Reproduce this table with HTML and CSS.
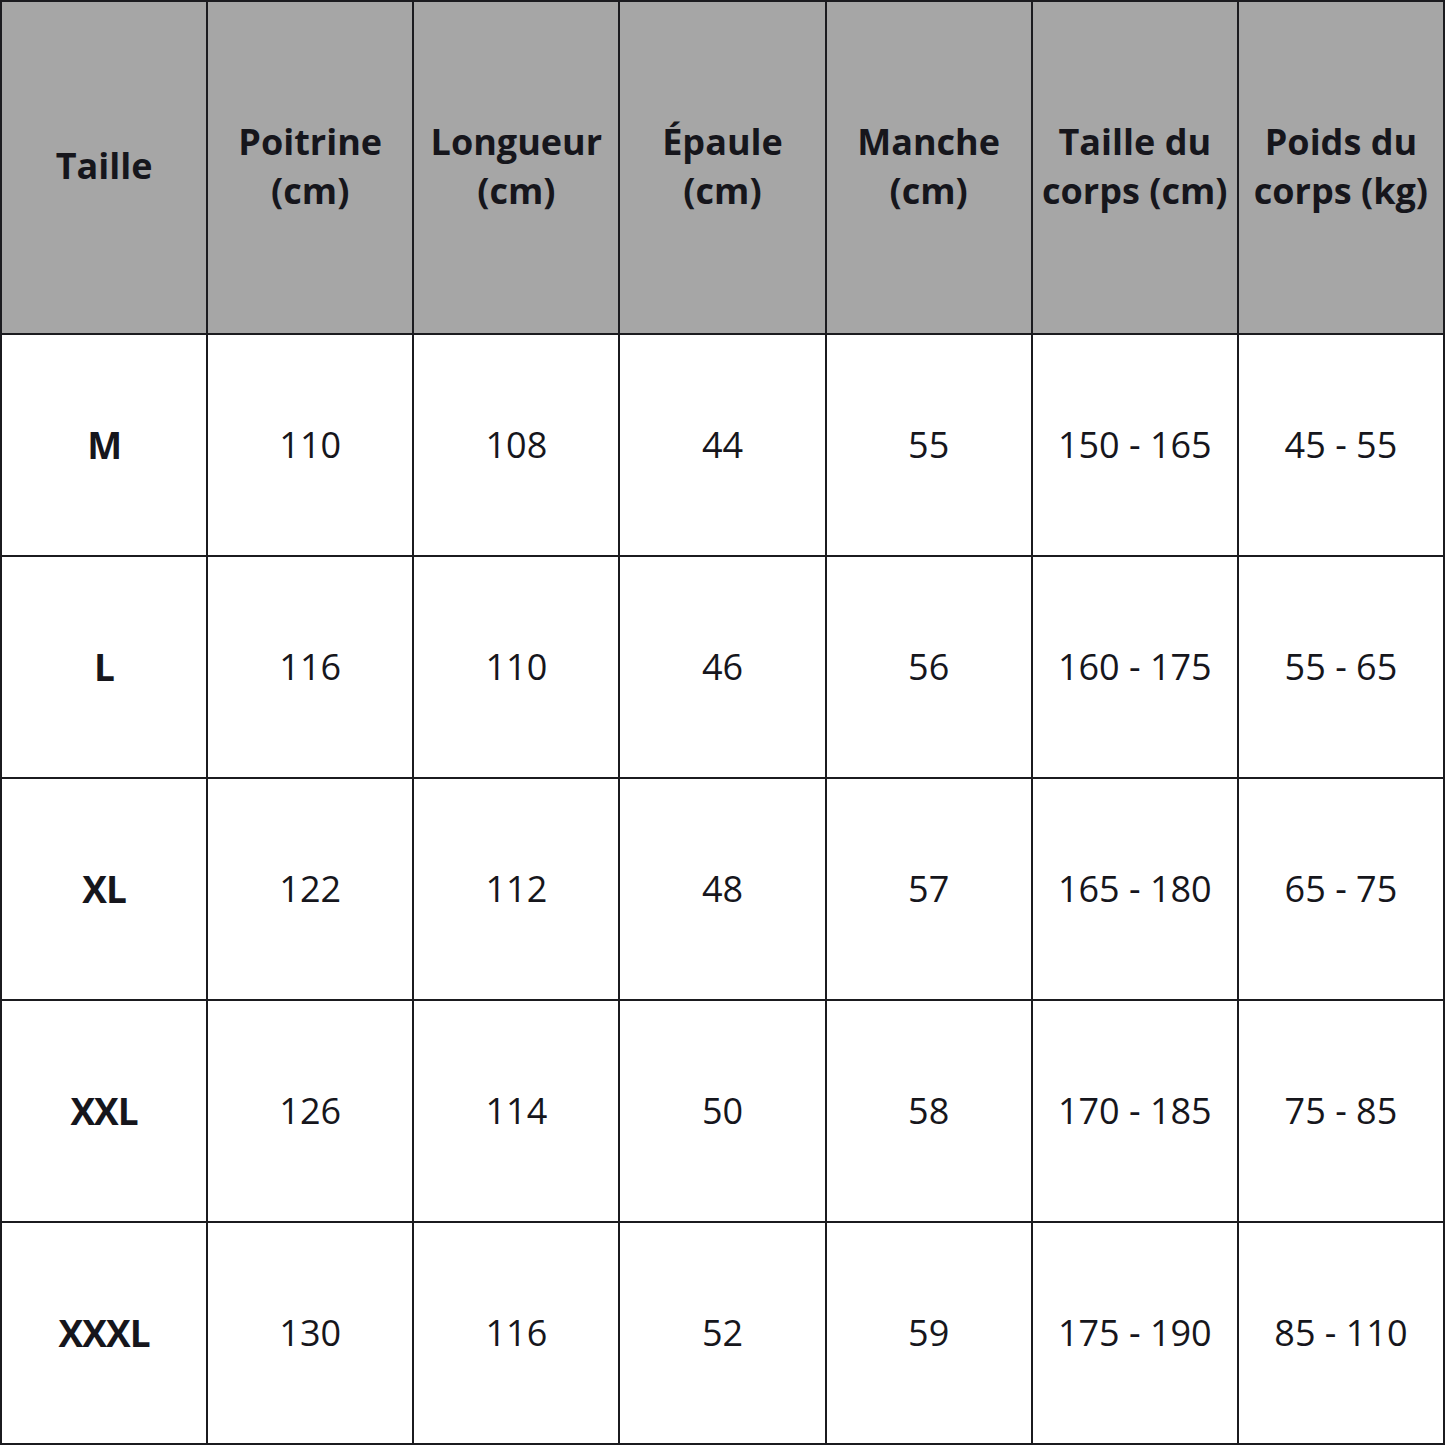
FILE: index.html
```html
<!DOCTYPE html>
<html lang="fr">
<head>
<meta charset="utf-8">
<title>Guide des tailles</title>
<link rel="stylesheet" href="styles.css">
</head>
<body>
<table class="size-table">
  <colgroup>
    <col class="c"><col class="c"><col class="c"><col class="c"><col class="c"><col class="c"><col class="c">
  </colgroup>
  <thead>
    <tr class="head-row">
      <th>Taille</th>
      <th>Poitrine<br>(cm)</th>
      <th>Longueur<br>(cm)</th>
      <th>Épaule<br>(cm)</th>
      <th>Manche<br>(cm)</th>
      <th>Taille du<br>corps (cm)</th>
      <th>Poids du<br>corps (kg)</th>
    </tr>
  </thead>
  <tbody>
    <tr><td class="size">M</td><td>110</td><td>108</td><td>44</td><td>55</td><td>150 - 165</td><td>45 - 55</td></tr>
    <tr><td class="size">L</td><td>116</td><td>110</td><td>46</td><td>56</td><td>160 - 175</td><td>55 - 65</td></tr>
    <tr><td class="size">XL</td><td>122</td><td>112</td><td>48</td><td>57</td><td>165 - 180</td><td>65 - 75</td></tr>
    <tr><td class="size">XXL</td><td>126</td><td>114</td><td>50</td><td>58</td><td>170 - 185</td><td>75 - 85</td></tr>
    <tr><td class="size">XXXL</td><td>130</td><td>116</td><td>52</td><td>59</td><td>175 - 190</td><td>85 - 110</td></tr>
  </tbody>
</table>
</body>
</html>
```
FILE: styles.css
```css
html, body {
  margin: 0;
  padding: 0;
  background: #ffffff;
}

.size-table {
  width: 1445px;
  height: 1445px;
  border-collapse: collapse;
  table-layout: fixed;
  font-family: "Open Sans", "Noto Sans", sans-serif;
  color: #16161c;
}

.size-table th,
.size-table td {
  border: 2px solid #1b1b1f;
  text-align: center;
  vertical-align: middle;
  padding: 0;
}

.head-row {
  height: 333px;
}

.size-table th {
  background: #a6a6a6;
  font-weight: 700;
  font-size: 36px;
  line-height: 49px;
  padding-bottom: 4px;
}

.size-table tbody tr {
  height: 222px;
}

.size-table td {
  font-size: 36px;
  font-weight: 400;
  line-height: 40px;
  background: #ffffff;
}

.size-table td.size {
  font-size: 37px;
  font-weight: 700;
  letter-spacing: -1px;
}
```
